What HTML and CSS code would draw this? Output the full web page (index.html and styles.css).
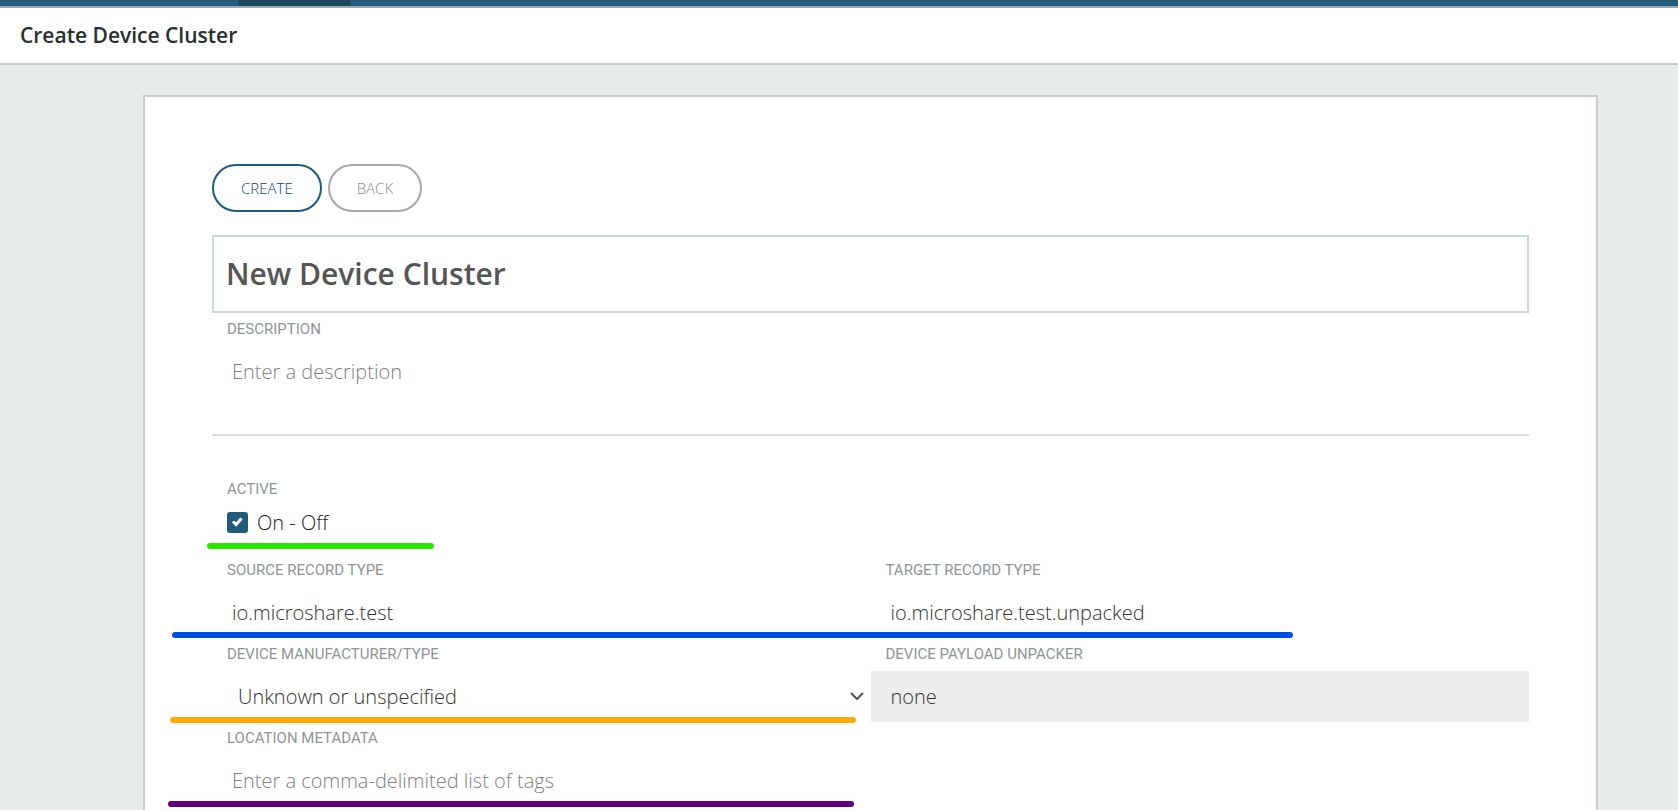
FILE: index.html
```html
<!DOCTYPE html>
<html lang="en">
<head>
<meta charset="utf-8">
<title>Create Device Cluster</title>
<link rel="stylesheet" href="styles.css">
</head>
<body>
<nav class="topbar" aria-label="Main"><span class="topbar-active"></span></nav>
<header class="page-header"><h1 class="page-title">Create Device Cluster</h1></header>
<main class="page">
  <form class="card">
    <div class="actions">
      <button type="button" class="btn btn-primary">CREATE</button>
      <button type="button" class="btn">BACK</button>
    </div>
    <input class="name-input" type="text" aria-label="Cluster name" value="New Device Cluster">
    <div class="field">
      <label class="label" for="description">DESCRIPTION</label>
      <input class="input" id="description" type="text" placeholder="Enter a description">
    </div>
    <hr class="divider">
    <div class="row">
      <div class="field">
        <span class="label">ACTIVE</span>
        <label class="check"><input class="check-box" type="checkbox" checked><svg class="check-mark" viewBox="0 0 21 21" aria-hidden="true"><path d="M6 10.5l3 3 5.5-6"/></svg><span>On - Off</span></label>
      </div>
      <span class="mark mark-green"></span>
    </div>
    <div class="row">
      <div class="field">
        <label class="label" for="source">SOURCE RECORD TYPE</label>
        <input class="input" id="source" type="text" value="io.microshare.test">
      </div>
      <div class="field">
        <label class="label" for="target">TARGET RECORD TYPE</label>
        <input class="input" id="target" type="text" value="io.microshare.test.unpacked">
      </div>
      <span class="mark mark-blue"></span>
    </div>
    <div class="row">
      <div class="field">
        <label class="label" for="device">DEVICE MANUFACTURER/TYPE</label>
        <div class="select-wrap">
          <select class="input select" id="device"><option>Unknown or unspecified</option></select>
          <svg class="chevron" viewBox="0 0 14 9" aria-hidden="true"><path d="M1 1l6 6 6-6"/></svg>
        </div>
      </div>
      <div class="field">
        <label class="label" for="unpacker">DEVICE PAYLOAD UNPACKER</label>
        <input class="input" id="unpacker" type="text" value="none" disabled>
      </div>
      <span class="mark mark-orange"></span>
    </div>
    <div class="row">
      <div class="field">
        <label class="label" for="location">LOCATION METADATA</label>
        <input class="input" id="location" type="text" placeholder="Enter a comma-delimited list of tags">
      </div>
      <span class="mark mark-purple"></span>
    </div>
  </form>
</main>
</body>
</html>
```
FILE: styles.css
```css
* { box-sizing: border-box; }

body {
  margin: 0;
  min-height: 100vh;
  display: flex;
  flex-direction: column;
  background: #e8eced;
  color: #1c2427;
  font-family: "Open Sans", sans-serif;
  font-size: 20px;
  font-weight: 300;
}

.topbar {
  display: flex;
  height: 8px;
  padding-left: 238px;
  background: #225b7a;
  border-bottom: 2px solid #a3a7a8;
}

.topbar-active { width: 112px; background: #19485f; }

.page-header {
  display: flex;
  align-items: center;
  height: 57px;
  padding: 0 20px 2px;
  background: #fff;
  border-bottom: 2px solid #cacccc;
}

.page-title { margin: 0; color: #263033; font-size: 21px; font-weight: 600; line-height: 28px; }

.page {
  flex: 1;
  display: flex;
  padding: 30px 80px 0 143px;
}

.card {
  flex: 1;
  min-width: 0;
  padding: 67px 67px 0;
  background: #fff;
  border: 2px solid #cacccc;
  border-bottom: 0;
}

.actions { display: flex; gap: 6px; margin-bottom: 23px; }

.btn {
  height: 48px;
  padding: 0 27px;
  background: #fff;
  border: 2px solid #a4a9ab;
  border-radius: 24px;
  color: #858a8c;
  font: 300 15px "Open Sans", sans-serif;
}

.btn-primary { border-color: #1c5a7d; color: #0c4668; }

.name-input {
  display: block;
  width: 100%;
  height: 78px;
  padding: 0 12px 2px;
  background: #fff;
  border: 2px solid #c9d8df;
  color: #555;
  font: 600 30px "Open Sans", sans-serif;
}

.row { position: relative; display: grid; grid-template-columns: 1fr 1fr; }

.label {
  display: block;
  height: 33px;
  padding-left: 15px;
  color: #8f9596;
  font-family: Roboto, sans-serif;
  font-size: 15px;
  font-weight: 400;
  line-height: 32px;
}

.input {
  display: block;
  width: 100%;
  height: 51px;
  padding: 0 20px;
  background: transparent;
  border: 0;
  border-radius: 0;
  color: #333;
  font: 300 20px "Open Sans", sans-serif;
}

.input::placeholder { color: #808080; opacity: 1; }
.input:disabled { background: #ededed; }

.select-wrap { position: relative; }
.select { padding-left: 26px; appearance: none; opacity: 1; }

.chevron {
  position: absolute;
  top: 21px;
  right: 7px;
  width: 14px;
  height: 9px;
  fill: none;
  stroke: #555;
  stroke-width: 2;
  pointer-events: none;
}

.divider {
  height: 2px;
  margin: 37px 0;
  background: #dcdddd;
  border: 0;
}

.check {
  position: relative;
  display: flex;
  align-items: center;
  gap: 9px;
  height: 48px;
  padding: 0 15px 16px;
}

.check-box {
  width: 21px;
  height: 21px;
  margin: 0;
  appearance: none;
  background: #225b7a;
  border-radius: 3px;
}

.check-mark {
  position: absolute;
  left: 15px;
  top: 5px;
  width: 21px;
  height: 21px;
  fill: none;
  stroke: #fff;
  stroke-width: 3;
}

.mark {
  position: absolute;
  bottom: 0;
  height: 6px;
  border-radius: 3px;
  pointer-events: none;
}

.mark-green { left: -5px; bottom: 5px; width: 227px; background: #28e800; }
.mark-blue { left: -40px; width: 1121px; background: #004ee6; }
.mark-orange { left: -42px; bottom: -1px; width: 686px; background: #ffa800; }
.mark-purple { left: -44px; bottom: -1px; width: 686px; background: #5e0080; }
```
